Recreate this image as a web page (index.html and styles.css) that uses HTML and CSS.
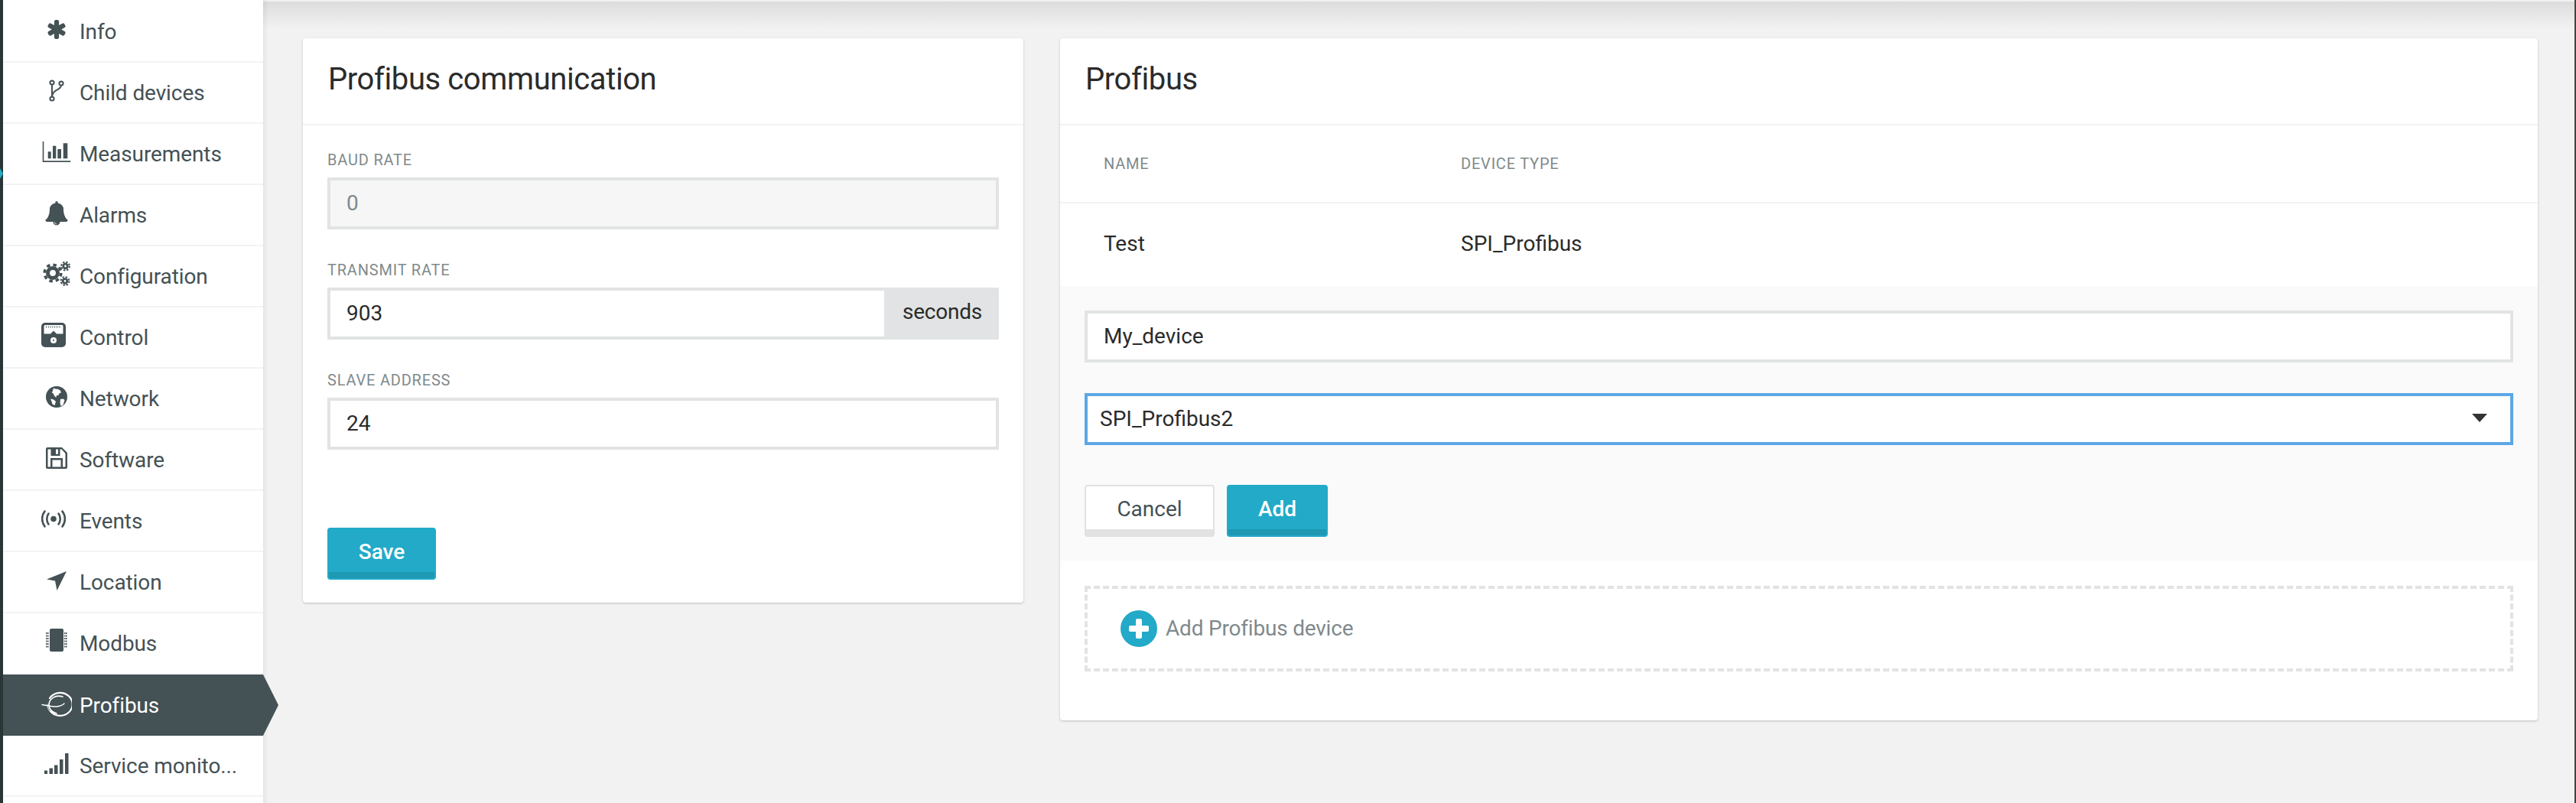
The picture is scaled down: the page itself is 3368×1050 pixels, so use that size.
FILE: index.html
```html
<!DOCTYPE html>
<html lang="en">
<head>
    <meta charset="UTF-8">
    <title>Profibus</title>
    <link rel="stylesheet" href="styles.css">
</head>
<body>
    <div class="top-shade"></div>
    <div class="app">
        <!-- Left edge of the main navigator -->
        <div class="rail"><span class="rail-mark"></span></div>

        <!-- Device tabs -->
        <nav class="tabs">
            <a class="tab" href="#info">
                <svg class="tab-icon" viewBox="0 0 40 40"><g transform="translate(5.5 3) scale(0.0162)"><path d="M1546 1050q46 26 59.5 77.5t-12.5 97.5l-64 110q-26 46-77.5 59.5t-97.5-12.5l-266-153v307q0 52-38 90t-90 38h-128q-52 0-90-38t-38-90v-307l-266 153q-46 26-97.5 12.5t-77.5-59.5l-64-110q-26-46-12.5-97.5t59.5-77.5l266-154-266-154q-46-26-59.5-77.5t12.5-97.5l64-110q26-46 77.5-59.5t97.5 12.5l266 153v-307q0-52 38-90t90-38h128q52 0 90 38t38 90v307l266-153q46-26 97.5-12.5t77.5 59.5l64 110q26 46 12.5 97.5t-59.5 77.5l-266 154z"/></g></svg>
                <span>Info</span>
            </a>
            <a class="tab" href="#child">
                <svg class="tab-icon" viewBox="0 0 40 40"><g fill="none" stroke-width="2"><circle cx="14" cy="7" r="2.6"/><circle cx="14" cy="28" r="2.6"/><circle cx="26" cy="8" r="2.6"/><path d="M14 9.6V25.4M26 10.6C26 17 15 16 14.4 24"/></g></svg>
                <span>Child devices</span>
            </a>
            <a class="tab" href="#measurements">
                <svg class="tab-icon" viewBox="0 0 40 40"><path d="M1.700 4h1.600v25.200H38.300V31H1.700z"/><path d="M8.700 17.300h4v9h-4zM15 9.700h4.300v16.600H15zM21.300 14h4.700v12.300h-4.700zM28.700 6.300h5.600v20h-5.600z"/></svg>
                <span>Measurements</span>
            </a>
            <a class="tab" href="#alarms">
                <svg class="tab-icon" viewBox="0 0 40 40"><g transform="translate(4.200 2) scale(0.0176)"><path d="M912 1696q0-16-16-16-59 0-101.500-42.500t-42.500-101.500q0-16-16-16t-16 16q0 73 51.500 124.500t124.500 51.500q16 0 16-16zm816-288q0 52-38 90t-90 38h-448q0 106-75 181t-181 75-181-75-75-181h-448q-52 0-90-38t-38-90q50-42 91-88t85-119.500 74.500-158.500 50-206 19.500-260q0-152 117-282.500t307-158.500q-8-19-8-39 0-40 28-68t68-28 68 28 28 68q0 20-8 39 190 28 307 158.500t117 282.500q0 139 19.500 260t50 206 74.500 158.500 85 119.500 91 88z"/></g></svg>
                <span>Alarms</span>
            </a>
            <a class="tab" href="#configuration">
                <svg class="tab-icon" viewBox="0 0 40 40"><g fill="none">
                    <circle cx="15" cy="16" r="6.500" stroke-width="5"/><circle cx="15" cy="16" r="10.800" stroke-width="3.600" stroke-dasharray="4.500 4"/>
                    <circle cx="31.500" cy="7" r="2.800" stroke-width="2.800"/><circle cx="31.500" cy="7" r="5.400" stroke-width="2" stroke-dasharray="2.400 1.850"/>
                    <circle cx="31" cy="26.500" r="2.800" stroke-width="2.800"/><circle cx="31" cy="26.500" r="5.400" stroke-width="2" stroke-dasharray="2.400 1.850"/>
                </g></svg>
                <span>Configuration</span>
            </a>
            <a class="tab" href="#control">
                <svg class="tab-icon" viewBox="0 0 40 40"><rect x="0" y="1" width="32" height="32" rx="5"/><path d="M3.500 5.500a1.500 1.500 0 0 1 1.500-1.500H27a1.500 1.500 0 0 1 1.500 1.500V15.500H20L16 11.500 12 15.500H3.500z" fill="#fff"/><circle cx="16" cy="24" r="4" fill="#fff"/><circle cx="16" cy="24" r="1" /><path d="M6 6.500h20" stroke-width="2" stroke-dasharray="1 1.800" fill="none"/></svg>
                <span>Control</span>
            </a>
            <a class="tab" href="#network">
                <svg class="tab-icon" viewBox="0 0 40 40"><circle cx="20" cy="18" r="14"/><path d="M16 6.500c2 1 3 1.500 5 1l3.500 1.800 1.500 3-3 1.500-.5 2.500-2.500-.5-.5 3-2.500-2-1-3-2-1 1-3zM25 21l3.500-.5 2 1.500-2 6.500-3 1.500-1-4.500zM12 20.500l4 1 3 2.500-1.500 5-3-1.500-1-3.500z" fill="#fff"/></svg>
                <span>Network</span>
            </a>
            <a class="tab" href="#software">
                <svg class="tab-icon" viewBox="0 0 40 40"><path fill-rule="evenodd" d="M6 6a2 2 0 0 1 2-2h19l7 7v19a2 2 0 0 1-2 2H8a2 2 0 0 1-2-2zM8.500 6.500V29.500H12V18h16V29.500H31.500V12L26.500 6.500H24.500V15H12.500V6.500zM14.500 20.500V29.500H25.500V20.500zM19 6.500V12.800H22V6.500z"/></svg>
                <span>Software</span>
            </a>
            <a class="tab" href="#events">
                <svg class="tab-icon" viewBox="0 0 40 40"><circle cx="16" cy="17.500" r="3.800"/><g fill="none" stroke-width="2.600" stroke-linecap="round"><path d="M9.500 10.500c-3 4-3 10 0 14M22.500 10.500c3 4 3 10 0 14"/><path d="M4.500 7.500c-4.500 6-4.500 14 0 20M27.500 7.500c4.500 6 4.500 14 0 20"/></g></svg>
                <span>Events</span>
            </a>
            <a class="tab" href="#location">
                <svg class="tab-icon" viewBox="0 0 40 40"><path d="M33 6L20.500 31 18 18.500 7 16.500z"/></svg>
                <span>Location</span>
            </a>
            <a class="tab" href="#modbus">
                <svg class="tab-icon" viewBox="0 0 40 40"><rect x="11" y="1" width="18" height="30" rx="2"/><path d="M6 7h4M6 10.500h4M6 14h4M6 17.500h4M6 21h4M6 24.500h4M30 7h4M30 10.500h4M30 14h4M30 17.500h4M30 21h4M30 24.500h4" stroke-width="1.800" stroke-dasharray="1.400 .5" fill="none"/></svg>
                <span>Modbus</span>
            </a>
            <a class="tab tab-active" href="#profibus">
                <svg class="tab-icon" viewBox="0 0 40 40"><g fill="none" stroke-linecap="round"><path d="M11 11A16 15 0 1 1 12 28" stroke-width="2.200"/><path d="M28 9C18 6 10 12 10 20 10 25 14 29 20 31" stroke-width="1.700"/><path d="M1 19.500C10 21 22 25 30 18" stroke-width="1.500"/><path d="M8 19C8 24 10 28 13 30" stroke-width="1"/></g></svg>
                <span>Profibus</span>
            </a>
            <a class="tab" href="#services">
                <svg class="tab-icon" viewBox="0 0 40 40"><path d="M4 26.500h4V31H4zM10.500 23.500h4.500V31h-4.500zM17 19.500h4.500V31H17zM24 12h4.500V31H24zM31 4h4.500V31H31z"/></svg>
                <span>Service monito...</span>
            </a>
        </nav>

        <main class="content">
            <!-- Communication settings -->
            <section class="card card-left">
                <h2 class="card-title">Profibus communication</h2>
                <form class="settings">
                    <div class="field">
                        <label>Baud rate</label>
                        <input class="input input-disabled" type="text" value="0" disabled>
                    </div>
                    <div class="field">
                        <label>Transmit rate</label>
                        <div class="input-group">
                            <input class="input" type="text" value="903">
                            <span class="addon">seconds</span>
                        </div>
                    </div>
                    <div class="field">
                        <label>Slave address</label>
                        <input class="input" type="text" value="24">
                    </div>
                    <button class="btn btn-primary btn-save" type="button">Save</button>
                </form>
            </section>

            <!-- Devices on the bus -->
            <section class="card card-right">
                <h2 class="card-title">Profibus</h2>
                <div class="row row-head">
                    <span>Name</span>
                    <span>Device type</span>
                </div>
                <div class="row row-body">
                    <span>Test</span>
                    <span>SPI_Profibus</span>
                </div>
                <form class="device-form">
                    <input class="input input-name" type="text" value="My_device">
                    <div class="select-wrap">
                        <select class="input input-select">
                            <option>SPI_Profibus2</option>
                        </select>
                        <span class="select-arrow"></span>
                    </div>
                    <div class="form-actions">
                        <button class="btn btn-default" type="button">Cancel</button>
                        <button class="btn btn-primary" type="button">Add</button>
                    </div>
                </form>
                <a class="add-device" href="#add">
                    <svg class="add-icon" viewBox="0 0 48 48"><circle cx="24" cy="24" r="24"/><path d="M20 13a2 2 0 0 1 2-2h4a2 2 0 0 1 2 2v7h7a2 2 0 0 1 2 2v4a2 2 0 0 1-2 2h-7v7a2 2 0 0 1-2 2h-4a2 2 0 0 1-2-2v-7h-7a2 2 0 0 1-2-2v-4a2 2 0 0 1 2-2h7z" fill="#fff"/></svg>
                    <span>Add Profibus device</span>
                </a>
            </section>
        </main>

        <div class="edge"></div>
    </div>
</body>
</html>
```

FILE: styles.css
```css
* {
    box-sizing: border-box;
}
html, body {
    margin: 0;
    height: 1050px;
    overflow: hidden;
}
body {
    font-family: Roboto, "Liberation Sans", sans-serif;
    font-size: 28px;
    color: #2b2b2b;
    background-color: #f2f2f2;
}
.top-shade {
    position: absolute;
    top: 2px;
    left: 4px;
    right: 2px;
    height: 36px;
    background: linear-gradient(to bottom, rgba(0, 0, 0, 0.09), rgba(0, 0, 0, 0));
    pointer-events: none;
}
.app {
    display: flex;
    height: 1050px;
}

/* Dark strips on both window edges */
.rail {
    position: relative;
    flex: 0 0 4px;
    background-color: #2a3535;
}
.rail-mark {
    position: absolute;
    top: 220px;
    left: 0;
    border-top: 7px solid transparent;
    border-bottom: 7px solid transparent;
    border-left: 4px solid #22aac8;
}
.edge {
    flex: 0 0 2px;
    background-color: #4a4238;
}

/* Tabs */
.tabs {
    flex: 0 0 340px;
    padding-top: 2px;
    background-color: #fff;
    position: relative;
    overflow: visible;
}
.tab {
    display: flex;
    align-items: center;
    height: 80px;
    padding-left: 50px;
    border-bottom: 2px solid #f3f3f3;
    color: #445155;
    text-decoration: none;
    white-space: nowrap;
    letter-spacing: -0.1px;
}
.tab span {
    padding-top: 1px;
}
.tab-icon {
    flex: 0 0 40px;
    width: 40px;
    height: 40px;
    margin-right: 10px;
    fill: #445155;
    stroke: #445155;
    stroke-width: 0;
}
.tab-active {
    position: relative;
    color: #fff;
    background-color: #445155;
    border-bottom: 0;
}
.tab-active .tab-icon {
    fill: #fff;
    stroke: #fff;
}
.tab-active::after {
    content: "";
    position: absolute;
    top: 0;
    left: 100%;
    border-top: 40px solid transparent;
    border-bottom: 40px solid transparent;
    border-left: 20px solid #445155;
}

/* Content area */
.content {
    flex: 1;
    display: flex;
    align-items: flex-start;
    gap: 48px;
    padding: 50px 48px 0 52px;
    box-shadow: inset 6px 0 6px -4px rgba(0, 0, 0, 0.07);
}
.card {
    background-color: #fff;
    border-radius: 4px;
    box-shadow: 0 1px 3px rgba(0, 0, 0, 0.22);
}
.card-left {
    flex: 0 0 942px;
}
.card-right {
    flex: 1;
    height: 892px;
}
.card-title {
    height: 114px;
    margin: 0;
    padding: 0 33px;
    border-bottom: 2px solid #f3f3f3;
    font-size: 40px;
    font-weight: 400;
    letter-spacing: -0.4px;
    line-height: 108px;
    color: #2b2b2b;
}

/* Settings form */
.settings {
    padding: 32px 32px 30px;
}
.field {
    margin-bottom: 40px;
}
.field label {
    display: block;
    height: 24px;
    margin-bottom: 12px;
    font-size: 20px;
    line-height: 26px;
    text-transform: uppercase;
    letter-spacing: 0.8px;
    color: #7f8a8c;
}
.input {
    display: block;
    width: 100%;
    height: 68px;
    padding: 0 21px 2px;
    border: 4px solid #e1e3e4;
    border-radius: 0;
    outline: none;
    background-color: #fff;
    font-family: inherit;
    font-size: 28px;
    color: #2b2b2b;
}
.input-disabled {
    background-color: #f6f6f6;
    color: #7f8a8c;
}
.input-group {
    display: flex;
}
.input-group .input {
    flex: 1;
    border-right: 0;
}
.addon {
    flex: 0 0 150px;
    height: 68px;
    padding-left: 2px;
    background-color: #e1e3e4;
    letter-spacing: -0.2px;
    line-height: 64px;
    text-align: center;
}

/* Buttons */
.btn {
    height: 68px;
    padding: 0 0 6px;
    border-radius: 4px;
    font-family: inherit;
    font-size: 28px;
    font-weight: 500;
    cursor: pointer;
}
.btn-primary {
    width: 132px;
    border: 2px solid #22aac8;
    background: linear-gradient(to top, #1f98b3 8px, #22aac8 8px);
    color: #fff;
}
.btn-default {
    width: 170px;
    border: 2px solid #e1e1e1;
    background: linear-gradient(to top, #e2e2e2 8px, #fff 8px);
    color: #445155;
    font-weight: 400;
}
.btn-save {
    display: block;
    width: 142px;
    margin-top: 102px;
}

/* Device table */
.row {
    display: grid;
    grid-template-columns: 467px 1fr;
    align-items: center;
    padding-left: 57px;
}
.row-head {
    height: 102px;
    border-bottom: 2px solid #f3f3f3;
    font-size: 20px;
    letter-spacing: 0.8px;
    text-transform: uppercase;
    color: #7f8a8c;
}
.row-body {
    height: 108px;
    padding-bottom: 4px;
}

/* Add device form */
.device-form {
    padding: 32px 32px 31px;
    background-color: #fafafa;
}
.input-name {
    margin-bottom: 40px;
}
.select-wrap {
    position: relative;
}
.input-select {
    appearance: none;
    -webkit-appearance: none;
    padding-left: 16px;
    border-color: #5ba7e6;
}
.select-arrow {
    position: absolute;
    top: 27px;
    right: 34px;
    border-top: 11px solid #333;
    border-left: 10px solid transparent;
    border-right: 10px solid transparent;
}
.form-actions {
    display: flex;
    gap: 16px;
    margin-top: 52px;
}
.add-device {
    display: flex;
    align-items: center;
    height: 112px;
    margin: 33px 32px 0;
    padding-left: 43px;
    border: 4px dashed #e3e3e3;
    color: #7f8a8c;
    letter-spacing: -0.2px;
    text-decoration: none;
}
.add-device span {
    padding-bottom: 2px;
}
.add-icon {
    width: 48px;
    height: 48px;
    margin-right: 11px;
    fill: #22aac8;
}
```
